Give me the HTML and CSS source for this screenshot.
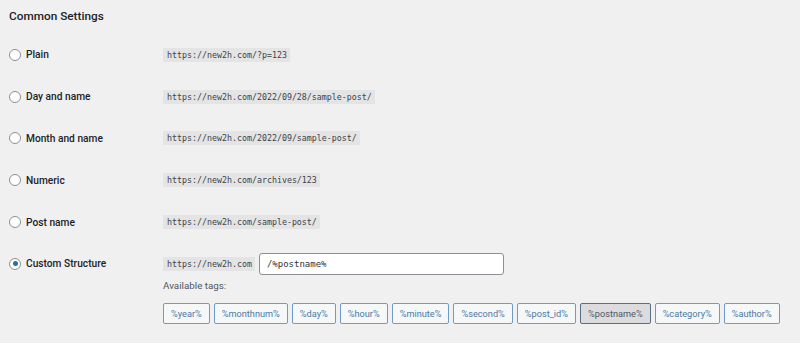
FILE: index.html
```html
<!DOCTYPE html>
<html lang="en">
<head>
  <meta charset="UTF-8" />
  <title>Permalink Settings</title>
  <link rel="stylesheet" href="styles.css">
</head>
<body>
  <div class="wrap">
    <h2>Common Settings</h2>

    <div class="row">
      <label class="choice"><span class="radio"></span>Plain</label>
      <div class="value"><code>https://new2h.com/?p=123</code></div>
    </div>

    <div class="row">
      <label class="choice"><span class="radio"></span>Day and name</label>
      <div class="value"><code>https://new2h.com/2022/09/28/sample-post/</code></div>
    </div>

    <div class="row">
      <label class="choice"><span class="radio"></span>Month and name</label>
      <div class="value"><code>https://new2h.com/2022/09/sample-post/</code></div>
    </div>

    <div class="row">
      <label class="choice"><span class="radio"></span>Numeric</label>
      <div class="value"><code>https://new2h.com/archives/123</code></div>
    </div>

    <div class="row">
      <label class="choice"><span class="radio"></span>Post name</label>
      <div class="value"><code>https://new2h.com/sample-post/</code></div>
    </div>

    <div class="row custom">
      <label class="choice"><span class="radio checked"></span>Custom Structure</label>
      <div class="value">
        <div class="custom-line">
          <code>https://new2h.com</code>
          <input class="structure" type="text" value="/%postname%">
        </div>
        <p class="tags-label">Available tags:</p>
        <div class="tags">
          <button>%year%</button>
          <button>%monthnum%</button>
          <button>%day%</button>
          <button>%hour%</button>
          <button>%minute%</button>
          <button>%second%</button>
          <button>%post_id%</button>
          <button class="active">%postname%</button>
          <button>%category%</button>
          <button>%author%</button>
        </div>
      </div>
    </div>
  </div>
</body>
</html>
```

FILE: styles.css
```css
body {
  margin: 0;
  background: #f0f0f1;
  color: #1d2327;
  font-family: Roboto, "Open Sans", sans-serif;
  height: 343px;
  overflow: hidden;
}

.wrap {
  padding: 7px 0 0 9px;
}

h2 {
  margin: 0 0 9px;
  font-size: 11.8px;
  font-weight: 500;
  line-height: 18px;
  color: #1d2327;
}

.row {
  display: grid;
  grid-template-columns: 154px 1fr;
  height: 41.8px;
  align-items: center;
}

.row .value {
  display: flex;
  align-items: center;
}

.row.custom {
  align-items: start;
  padding-top: 10px;
}

.row.custom .value {
  display: block;
}

.choice {
  display: flex;
  align-items: center;
  gap: 5px;
  font-size: 10.2px;
  font-weight: 500;
  color: #1d2327;
}

.row.custom .choice {
  height: 22px;
}

.radio {
  width: 10px;
  height: 10px;
  border: 1px solid #8c8f94;
  border-radius: 50%;
  background: #fff;
  display: flex;
  align-items: center;
  justify-content: center;
}

.radio.checked::after {
  content: "";
  width: 5px;
  height: 5px;
  border-radius: 50%;
  background: #2271b1;
}

code {
  font-family: "DejaVu Sans Mono", "Liberation Mono", monospace;
  font-size: 8.3px;
  line-height: 14px;
  padding: 0 3px 0 4px;
  display: block;
  background: #e4e4e5;
  color: #3c434a;
}

.custom-line {
  display: flex;
  align-items: center;
  gap: 4px;
  height: 22px;
}

.structure {
  width: 245px;
  height: 22px;
  box-sizing: border-box;
  border: 1px solid #8c8f94;
  border-radius: 3px;
  background: #fff;
  padding: 0 7px;
  font-family: "DejaVu Sans Mono", "Liberation Mono", monospace;
  font-size: 9px;
  color: #2c3338;
}

.tags-label {
  margin: 4px 0 0;
  font-size: 9.8px;
  line-height: 14px;
  color: #50575e;
}

.tags {
  display: flex;
  gap: 4px;
  margin-top: 10px;
}

.tags button {
  height: 21px;
  padding: 0 7px;
  border: 1px solid #6f9cc4;
  border-radius: 2px;
  background: #f6f7f7;
  color: #4a7aa6;
  font-family: Roboto, "Open Sans", sans-serif;
  font-size: 9.2px;
  cursor: pointer;
}

.tags button.active {
  background: #dcdcde;
  border-color: #56708a;
  color: #50575e;
}
```
